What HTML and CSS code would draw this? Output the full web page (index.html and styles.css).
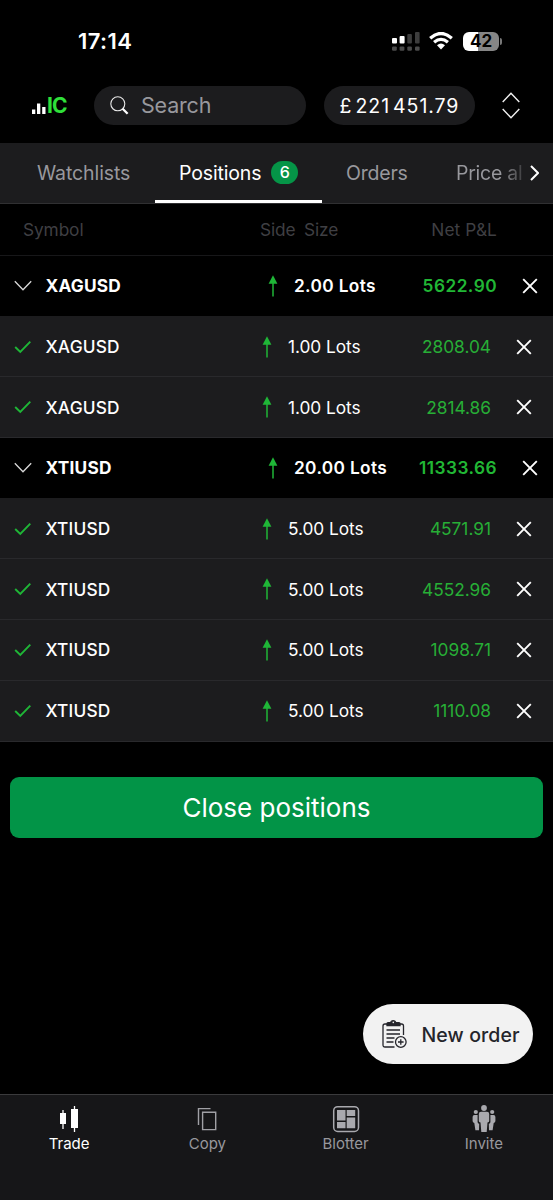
FILE: index.html
```html
<!DOCTYPE html>
<html lang="en">
<head>
<meta charset="utf-8">
<meta name="viewport" content="width=device-width">
<title>Positions</title>
<link rel="stylesheet" href="styles.css">
</head>
<body>
<svg class="defs" aria-hidden="true">
  <symbol id="down" viewBox="0 0 18 12"><path d="M.8 1.2 9 9.800 17.200 1.200" fill="none" stroke="#d8d8d8" stroke-width="1.300"/></symbol>
  <symbol id="check" viewBox="0 0 18 14"><path d="M1.200 7 6.300 12 16.300 1.600" fill="none" stroke="#1fb637" stroke-width="1.900"/></symbol>
  <symbol id="up" viewBox="0 0 10 22"><path d="M5 7V21.500" stroke="#1fb637" stroke-width="1.500"/><path d="M5 .2 9.400 8.800H.6Z" fill="#1fb637"/></symbol>
  <symbol id="close" viewBox="0 0 16 16"><path d="M1.200 1.200 14.800 14.800M14.800 1.200 1.200 14.800" stroke="#fff" stroke-width="1.900"/></symbol>
</svg>
<main class="app">
  <div class="status">
    <span class="clock">17:14</span>
    <div class="indicators">
      <svg class="signal" width="28" height="19" viewBox="0 0 28 19">
        <g fill="#fff"><rect x="0" y="6" width="5" height="5.500" rx="1"/><rect x="7.600" y="4" width="5" height="7.500" rx="1"/></g>
        <g fill="#3d3d3d"><rect x="15.300" y="2" width="4.600" height="9.500" rx="1"/><rect x="23" y="0" width="4.600" height="11.500" rx="1"/></g>
        <g fill="#4b4b4b"><rect x="0" y="14.400" width="4.800" height="4.400" rx="1.200"/><rect x="7.600" y="14.400" width="4.800" height="4.400" rx="1.200"/><rect x="15.300" y="14.400" width="4.600" height="4.400" rx="1.200"/><rect x="23" y="14.400" width="4.600" height="4.400" rx="1.200"/></g>
      </svg>
      <svg class="wifi" width="24" height="18" viewBox="0 0 24 18">
        <g fill="none" stroke="#fff" stroke-width="3.300"><path d="M1.200 6.200Q12-3.200 22.800 6.200"/><path d="M5.100 10.300Q12 4.500 18.900 10.300"/></g>
        <path d="M8 13.200Q12 10 16 13.200L12 17.500Z" fill="#fff"/>
      </svg>
      <span class="battery">42</span><i class="battery-tip"></i>
    </div>
  </div>
  <header class="top">
    <div class="logo">
      <svg width="15" height="16" viewBox="0 0 15 16" fill="#fff"><path d="M0 11.500h3.300V16H0zM5 5.500h3.300V16H5zM10.200 9h3.300v7h-3.300z"/></svg><span>IC</span>
    </div>
    <div class="search">
      <svg width="19" height="19" viewBox="0 0 19 19"><circle cx="7.800" cy="7.800" r="7" fill="none" stroke="#e8e8e8" stroke-width="1.100"/><path d="M12.600 12.800 17.600 17.800" stroke="#fff" stroke-width="2.300"/></svg>
      <span>Search</span>
    </div>
    <div class="balance"><span>£</span><span>221</span><span>451.79</span></div>
    <svg class="expand" width="18" height="27" viewBox="0 0 18 27"><path d="M.7 10 9 1.200 17.300 10M.7 17 9 25.800 17.300 17" fill="none" stroke="#f0f0f0" stroke-width="1.400"/></svg>
  </header>
  <nav class="tabs">
    <span class="tab watch">Watchlists</span>
    <span class="tab active"><span>Positions</span><b>6</b></span>
    <span class="tab orders">Orders</span>
    <span class="tab price">Price al</span>
    <svg class="more" width="9" height="16" viewBox="0 0 9 16"><path d="M1 1 8 8 1 15" fill="none" stroke="#fff" stroke-width="2"/></svg>
  </nav>
  <section class="positions">
    <div class="heads"><span class="h-symbol">Symbol</span><span class="h-side">Side</span><span class="h-size">Size</span><span class="h-pnl">Net P&amp;L</span></div>
    <div class="row group"><svg class="mark"><use href="#down"/></svg><span class="symbol">XAGUSD</span><svg class="up"><use href="#up"/></svg><span class="size">2.00 Lots</span><span class="pnl">5622.90</span><svg class="close"><use href="#close"/></svg></div>
    <div class="row"><svg class="mark"><use href="#check"/></svg><span class="symbol">XAGUSD</span><svg class="up"><use href="#up"/></svg><span class="size">1.00 Lots</span><span class="pnl">2808.04</span><svg class="close"><use href="#close"/></svg></div>
    <div class="row"><svg class="mark"><use href="#check"/></svg><span class="symbol">XAGUSD</span><svg class="up"><use href="#up"/></svg><span class="size">1.00 Lots</span><span class="pnl">2814.86</span><svg class="close"><use href="#close"/></svg></div>
    <div class="row group"><svg class="mark"><use href="#down"/></svg><span class="symbol">XTIUSD</span><svg class="up"><use href="#up"/></svg><span class="size">20.00 Lots</span><span class="pnl">11333.66</span><svg class="close"><use href="#close"/></svg></div>
    <div class="row"><svg class="mark"><use href="#check"/></svg><span class="symbol">XTIUSD</span><svg class="up"><use href="#up"/></svg><span class="size">5.00 Lots</span><span class="pnl">4571.91</span><svg class="close"><use href="#close"/></svg></div>
    <div class="row"><svg class="mark"><use href="#check"/></svg><span class="symbol">XTIUSD</span><svg class="up"><use href="#up"/></svg><span class="size">5.00 Lots</span><span class="pnl">4552.96</span><svg class="close"><use href="#close"/></svg></div>
    <div class="row"><svg class="mark"><use href="#check"/></svg><span class="symbol">XTIUSD</span><svg class="up"><use href="#up"/></svg><span class="size">5.00 Lots</span><span class="pnl">1098.71</span><svg class="close"><use href="#close"/></svg></div>
    <div class="row"><svg class="mark"><use href="#check"/></svg><span class="symbol">XTIUSD</span><svg class="up"><use href="#up"/></svg><span class="size">5.00 Lots</span><span class="pnl">1110.08</span><svg class="close"><use href="#close"/></svg></div>
  </section>
  <button class="close-all">Close positions</button>
  <button class="new-order">
    <svg width="25" height="29" viewBox="0 0 25 29" fill="none" stroke="#25252b" stroke-width="1.300">
      <path d="M12.500 27H3Q1 27 1 25V6Q1 4 3 4H19.500Q21.500 4 21.500 6V15"/>
      <path d="M5 5.500V3.700Q5 2.700 6 2.700H8.700Q9 .7 11.200 .7T13.700 2.700H17Q18 2.700 18 3.700V5.500Z" fill="#25252b"/>
      <circle cx="11.300" cy="2.400" r=".8" fill="#f2f2f2" stroke="none"/>
      <path d="M4.500 10H18M4.500 14H18M4.500 18H12.500M4.500 22H11.500"/>
      <circle cx="18.800" cy="22" r="5.300" fill="#f2f2f2"/><path d="M16 22H21.600M18.800 19.200V24.800"/>
    </svg>
    <span>New order</span>
  </button>
  <nav class="bottom">
    <div class="item on"><svg width="28" height="28" viewBox="0 0 28 28"><path d="M5 8h6v11H5zM16 4h7v19h-7z" fill="#fff"/><path d="M8 5V24M19.500 1V27" stroke="#fff" stroke-width="1.300"/></svg><span>Trade</span></div>
    <div class="item"><svg width="28" height="28" viewBox="0 0 28 28" fill="none" stroke="#a0a0a5" stroke-width="1.400"><path d="M5.500 20V3.600H17.500"/><path d="M9.600 7.300H22.700V24.600H9.600Z"/></svg><span>Copy</span></div>
    <div class="item"><svg width="28" height="28" viewBox="0 0 28 28"><rect x="1.700" y="1.700" width="24.800" height="24.800" rx="4" fill="none" stroke="#a9a9ae" stroke-width="1.500"/><path d="M5 5h8.500v10.500H5zM14.700 5h8.500v6h-8.500zM5 17h8.500v6.300H5zM14.700 12.400h8.500v10.900h-8.500z" fill="#a9a9ae"/></svg><span>Blotter</span></div>
    <div class="item"><svg width="28" height="28" viewBox="0 0 28 28" fill="#a9a9ae"><circle cx="14" cy="3" r="2.900"/><circle cx="5.800" cy="7" r="2.100"/><circle cx="22.200" cy="7" r="2.100"/><path d="M11 6.800h6q2.200 0 2.200 2.200v7q0 1.300-1.700 1.500L16.700 27h-5.400L10.500 17.500Q8.800 17.300 8.800 16V9q0-2.200 2.200-2.200z"/><path d="M4.500 9.900h3.100v7q0 1.600 1.600 1.900L9 25.200H5.400L4.300 18Q2.600 17.500 2.600 16v-4q0-2.100 1.900-2.100zM23.500 9.900h-3.100v7q0 1.600-1.600 1.900L19 25.200h3.600L23.700 18q1.700-.5 1.700-2v-4q0-2.100-1.900-2.100z"/></svg><span>Invite</span></div>
  </nav>
</main>
</body>
</html>
```
FILE: styles.css
```css
* { box-sizing: border-box; }
body { margin: 0; background: #000; color: #fff; font-family: Inter, "Liberation Sans", sans-serif; }
svg { display: block; flex: none; }
button { border: 0; font: inherit; }
.defs { position: absolute; width: 0; height: 0; }
.app { display: flex; flex-direction: column; width: 553px; height: 1200px; overflow: hidden; white-space: nowrap; }

.status { display: flex; justify-content: space-between; height: 86px; padding: 27px 51px 0 78px; }
.clock { height: 28px; line-height: 28px; font-size: 22px; font-weight: 600; letter-spacing: .4px; }
.indicators { display: flex; align-items: center; height: 28px; }
.signal { margin-right: 9px; }
.wifi { margin-right: 10px; }
.battery { width: 36px; height: 19px; border-radius: 6px; background: linear-gradient(90deg, #fff 42%, #868686 42%); color: #000; font-size: 17px; font-weight: 700; line-height: 19px; text-align: center; }
.battery-tip { width: 2px; height: 7px; margin-left: 1px; border-radius: 0 2px 2px 0; background: #777; }

.top { display: flex; align-items: center; height: 39px; padding-left: 32px; }
.logo { display: flex; align-items: center; width: 62px; color: #2fe03a; font-size: 21px; font-weight: 700; letter-spacing: -1px; }
.logo span { line-height: 20px; }
.search { display: flex; align-items: center; gap: 12px; width: 212px; height: 39px; padding: 0 0 1px 16px; border-radius: 20px; background: #1c1c1e; color: #98989d; font-size: 21.5px; letter-spacing: -.2px; }
.balance { display: flex; align-items: center; justify-content: center; gap: 3px; width: 151px; height: 39px; margin-left: 18px; border-radius: 20px; background: #1c1c1e; font-size: 19.5px; letter-spacing: .95px; }
.expand { margin-left: 27px; }

.tabs { display: flex; align-items: center; height: 60.500px; margin-top: 18px; background: #1c1c1e; border-bottom: 1px solid #303032; color: #98989d; font-size: 19.500px; }
.tab { letter-spacing: -.1px; }
.watch { width: 155px; padding-left: 37px; }
.active { display: flex; align-items: center; align-self: stretch; gap: 10px; width: 167px; padding: 3px 0 0 24px; border-bottom: 3px solid #fff; color: #fff; letter-spacing: -.15px; }
.active b { width: 27px; height: 23px; border-radius: 12px; background: #059447; font-size: 16px; font-weight: 500; line-height: 23px; text-align: center; }
.orders { width: 134px; padding-left: 24px; letter-spacing: -.2px; }
.price { width: 74px; background: linear-gradient(90deg, #98989d 60%, #38383a 92%); background-clip: text; -webkit-background-clip: text; color: transparent; letter-spacing: -.25px; }

.heads { display: flex; align-items: center; height: 52.500px; padding: 1px 56px 0 23px; border-bottom: 1px solid #171719; color: #3f3f43; font-size: 17.300px; letter-spacing: -.1px; }
.h-symbol { width: 237px; }
.h-side { width: 44px; }
.h-pnl { margin-left: auto; letter-spacing: .1px; }
.row { display: flex; align-items: center; height: 60.700px; padding: 0 21px 0 14px; background: #1c1c1e; border-bottom: 1px solid #29292c; font-size: 17.300px; }
.group { padding-right: 15px; background: #000; border-color: #1c1c1e; font-weight: 700; }
.mark { width: 18px; height: 14px; }
.symbol { flex: 1; padding-left: 13.500px; font-weight: 500; letter-spacing: .2px; }
.group .symbol { font-weight: 700; }
.up { width: 10px; height: 22px; margin-right: 16px; }
.pnl { width: 110px; color: #27ae36; text-align: right; }
.group .pnl { color: #21b735; font-weight: 600; letter-spacing: .45px; }
.size { width: 93px; letter-spacing: -.05px; }
.group .size { font-weight: 600; letter-spacing: .35px; }
.close { width: 16px; height: 16px; margin-left: 25px; }

.close-all { width: 533px; height: 61px; margin: 35px 10px 0; border-radius: 9px; background: #029447; color: #fff; font-size: 26px; }
.new-order { display: flex; align-items: center; align-self: flex-end; gap: 15px; width: 170px; height: 60px; margin: auto 20px 30px 0; padding: 1px 0 0 18.500px; border-radius: 30px; background: #f2f2f2; color: #25252b; font-size: 19.500px; font-weight: 500; letter-spacing: .1px; }
.bottom { display: grid; grid-template-columns: repeat(4, 1fr); height: 106px; padding-top: 10px; background: #161618; border-top: 1px solid #3a3a3c; color: #98989d; font-size: 15px; }
.item { display: flex; flex-direction: column; align-items: center; }
.item span { margin-top: 1px; line-height: 20px; }
.on { color: #fff; }
```
